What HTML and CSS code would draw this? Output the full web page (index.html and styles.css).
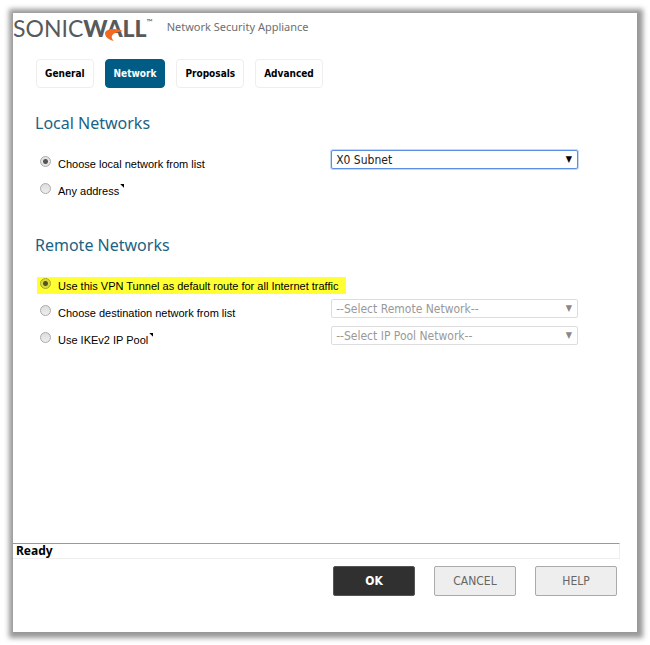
FILE: index.html
```html
<!DOCTYPE html>
<html lang="en">

<head>
    <meta charset="UTF-8">
    <title>Network Security Appliance</title>
    <link rel="stylesheet" href="styles.css">
</head>

<body>
    <form class="dialog">
        <header class="header">
            <div class="logo">
                <span class="logo-light">SONIC</span><span class="logo-bold">WALL</span><span class="logo-tm">™</span>
                <svg class="logo-swoosh" viewBox="0 0 18 14" aria-hidden="true">
                    <path d="M18 3 C12 0 1 0 0 5 C0 9 4 12 9 13 C6 10 4 5 18 3 Z" fill="#f26a21" />
                </svg>
            </div>
            <span class="product">Network Security Appliance</span>
        </header>

        <nav class="tabs">
            <button type="button" class="tab">General</button>
            <button type="button" class="tab active">Network</button>
            <button type="button" class="tab">Proposals</button>
            <button type="button" class="tab">Advanced</button>
        </nav>

        <main class="content">
            <section class="section">
                <h2>Local Networks</h2>
                <div class="row">
                    <label class="option"><input type="radio" name="local" checked><span>Choose local network from list</span></label>
                    <div class="select focused">
                        <select aria-label="Local network">
                            <option>X0 Subnet</option>
                        </select>
                    </div>
                </div>
                <div class="row">
                    <label class="option"><input type="radio" name="local"><span class="tip">Any address</span></label>
                </div>
            </section>

            <section class="section">
                <h2>Remote Networks</h2>
                <div class="row">
                    <label class="option highlight"><input type="radio" name="remote" checked><span>Use this VPN Tunnel as default route for all Internet traffic</span></label>
                </div>
                <div class="row">
                    <label class="option"><input type="radio" name="remote"><span>Choose destination network from list</span></label>
                    <div class="select">
                        <select aria-label="Destination network" disabled>
                            <option>--Select Remote Network--</option>
                        </select>
                    </div>
                </div>
                <div class="row">
                    <label class="option"><input type="radio" name="remote"><span class="tip">Use IKEv2 IP Pool</span></label>
                    <div class="select">
                        <select aria-label="IP pool network" disabled>
                            <option>--Select IP Pool Network--</option>
                        </select>
                    </div>
                </div>
            </section>
        </main>

        <div class="status">Ready</div>
        <footer class="buttons">
            <button type="submit" class="btn primary">OK</button>
            <button type="button" class="btn">CANCEL</button>
            <button type="button" class="btn">HELP</button>
        </footer>
    </form>
</body>

</html>
```

FILE: styles.css
```css
* {
    box-sizing: border-box;
}

body {
    margin: 0;
    padding: 13px;
    min-height: 100vh;
    display: flex;
    background: #fff;
    font-family: "DejaVu Sans Condensed", "DejaVu Sans", sans-serif;
    font-size: 12px;
    color: #000;
}

.dialog {
    flex: 1;
    display: flex;
    flex-direction: column;
    background: #fff;
    box-shadow: 1px 1px 5px 5px #999;
}

.header {
    display: flex;
    gap: 14px;
    height: 32px;
}

.logo {
    position: relative;
    display: flex;
    font-family: Lato, sans-serif;
    font-size: 23px;
    line-height: 30px;
    color: #58595b;
}

.logo-light {
    font-weight: 400;
}

.logo-bold {
    font-weight: 900;
}

.logo-tm {
    font-size: 8px;
    line-height: 18px;
}

.logo-swoosh {
    position: absolute;
    left: 92px;
    top: 15px;
    width: 18px;
    height: 14px;
}

.product {
    font-family: "Noto Sans", sans-serif;
    font-size: 11px;
    line-height: 28px;
    color: #6d6e71;
}

.tabs {
    display: flex;
    gap: 11px;
    padding: 14px 23px 0;
}

.tab {
    height: 29px;
    padding: 0 8px;
    border: 1px solid #eee;
    border-radius: 4px;
    background: #fff;
    font-family: "DejaVu Sans Condensed", sans-serif;
    font-size: 10px;
    font-weight: bold;
    color: #000;
}

.tab.active {
    border-color: #005c84;
    background: #005c84;
    color: #fff;
}

.content {
    flex: 1;
    padding: 24px 59px 0 22px;
}

.section {
    margin-bottom: 30px;
}

.section h2 {
    margin: 0 0 16px;
    font-family: "Noto Sans", sans-serif;
    font-size: 16px;
    line-height: 22px;
    font-weight: normal;
    color: #1a6383;
}

.row {
    display: grid;
    grid-template-columns: 6fr 5fr;
    height: 27px;
}

.option {
    display: flex;
    align-items: flex-start;
    gap: 7px;
    justify-self: start;
    height: 17px;
    margin: 5px 0 0 2px;
    padding: 0 8px 0 3px;
    font-family: "Liberation Sans", Arial, sans-serif;
    font-size: 11px;
    line-height: 19px;
    white-space: nowrap;
}

.highlight {
    background: #ffff32;
}

.option input {
    appearance: none;
    flex: none;
    width: 11px;
    height: 11px;
    margin: 1px 0 0;
    border: 1px solid #aaa;
    border-radius: 50%;
    background: linear-gradient(#ddd, #eee);
}

.option input:checked {
    background: radial-gradient(circle, #555 0 2px, #e4e4e4 3px);
}

.highlight input:checked {
    border-color: #a5a52b;
    background: radial-gradient(circle, #555520 0 2px, #dada40 3px);
}

.tip::after {
    content: "";
    display: inline-block;
    width: 4px;
    height: 4px;
    margin-left: 1px;
    vertical-align: 7px;
    background: #000;
    clip-path: polygon(0 0, 100% 0, 100% 100%);
}

.select {
    position: relative;
    height: 19px;
}

.select select {
    appearance: none;
    display: block;
    width: 100%;
    height: 19px;
    padding: 0 20px 0 4px;
    border: 1px solid #ddd;
    border-radius: 2px;
    background: #fff;
    font-family: inherit;
    font-size: 12px;
    color: #999;
    opacity: 1;
}

.select::after {
    content: "▼";
    position: absolute;
    right: 6px;
    top: 0;
    font-size: 9px;
    line-height: 18px;
    color: #888;
    pointer-events: none;
}

.select.focused select {
    border-color: #5b8fe6;
    box-shadow: 0 0 0 1px #c3d7f7;
    color: #222;
}

.select.focused::after {
    color: #000;
}

.status {
    height: 16px;
    margin-right: 17px;
    padding-left: 3px;
    border: 1px solid #eee;
    border-top-color: #999;
    border-left: 0;
    font-family: "Noto Sans", sans-serif;
    line-height: 14px;
    font-weight: bold;
}

.buttons {
    display: flex;
    justify-content: flex-end;
    gap: 19px;
    padding: 7px 20px 36px;
}

.btn {
    width: 82px;
    height: 30px;
    border: 1px solid #aaa;
    border-radius: 2px;
    background: #eee;
    font-family: inherit;
    font-size: 12px;
    color: #666;
}

.btn.primary {
    border-color: #555;
    background: #303030;
    font-weight: bold;
    color: #fff;
}
```
